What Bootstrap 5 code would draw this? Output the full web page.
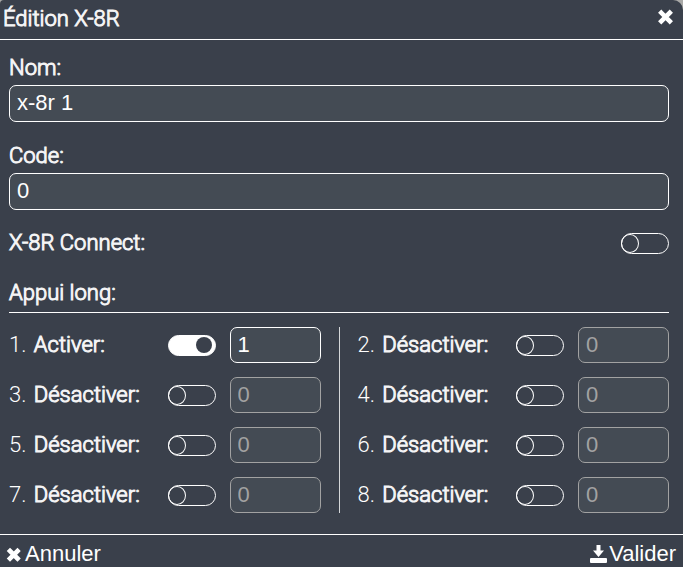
<!DOCTYPE html>
<html lang="fr">
<head>
<meta charset="utf-8">
<meta name="viewport" content="width=device-width, initial-scale=1">
<title>Édition X-8R</title>
<link href="https://cdn.jsdelivr.net/npm/bootstrap@5.3.0/dist/css/bootstrap.min.css" rel="stylesheet">
<style>
body { background: #a9a9a7; font-family: Roboto, sans-serif; font-size: 22px; line-height: 26px; color: #fff; }
.panel { background: #3a404b; border-radius: 4px 10px 0 0; min-height: 100vh; }
.panel-head { border-bottom: 1px solid #fff; padding: 6px 9px 7px 3px; }
.panel-main { padding: 15px 14px 21px 9px; }
.panel-foot { border-top: 1px solid #fff; padding: 7px 7px 0 6px; }
.title, .strong-label { font-size: 22px; line-height: 26px; font-weight: 300; -webkit-text-stroke: 1px #f4f4f5; }
.plain-btn { background: none; border: 0; padding: 0; color: #fff; font-family: "Liberation Sans", sans-serif; font-size: 22px; line-height: 24px; }
.field { background: #444b54; border: 1px solid #fff; border-radius: 7px; color: #fff; font-family: "Liberation Sans", sans-serif; font-size: 22px; line-height: 26px; height: 37px; padding: 0 7px 2px; }
.field:focus { background: #444b54; color: #fff; }
.field:disabled { background: #444b54; border-color: #a2a2a2; color: #a2a2a2; opacity: 1; }
.field-sm { width: 91px; height: 36px; padding-bottom: 0; }
.toggle { appearance: none; display: flex; align-items: center; flex: none; width: 48px; height: 21px; border: 1px solid #fff; border-radius: 11px; }
.toggle::before { content: ""; flex: none; width: 18px; height: 19px; border: 1px solid #fff; border-radius: 50%; margin-left: -1px; }
.toggle:checked { background: #fff; justify-content: end; padding-right: 3px; }
.toggle:checked::before { width: 16px; height: 16px; border: 0; background: #3a404b; }
.section { border-bottom: 1px solid #fff; padding-bottom: 6px; margin-bottom: 14px; }
.group { padding-top: 5px; }
.group-inline { padding-top: 4px; }
.num { font-weight: 300; margin-right: 2px; }
.options { row-gap: 14px; }
.split { width: 1px; background: #d5d7d9; margin: 0 18px; }
.option { gap: 14px; }
.save { gap: 2px; }
</style>
</head>
<body>
<form class="panel d-flex flex-column">
  <header class="panel-head d-flex justify-content-between align-items-center">
    <h1 class="title m-0">Édition X-8R</h1>
    <button type="button" class="plain-btn d-flex" aria-label="Fermer">
      <svg width="17" height="20" viewBox="0 0 17 20"><path d="M4.300 3.800 12.700 12.200M12.700 3.800 4.300 12.200" fill="none" stroke="#fff" stroke-width="4.600" stroke-linecap="square"/></svg>
    </button>
  </header>
  <main class="panel-main">
    <label class="strong-label d-block mb-1" for="nom">Nom:</label>
    <input class="field form-control mb-3" id="nom" type="text" value="x-8r 1">
    <div class="group">
      <label class="strong-label d-block mb-1" for="code">Code:</label>
      <input class="field form-control" id="code" type="text" value="0">
    </div>
    <div class="group-inline d-flex justify-content-between align-items-center mt-3">
      <label class="strong-label" for="connect">X-8R Connect:</label>
      <input class="toggle m-0" id="connect" type="checkbox" role="switch">
    </div>
    <h2 class="strong-label section mt-4 pt-0">Appui long:</h2>
    <div class="d-flex">
      <div class="options d-flex flex-column flex-fill">
        <div class="option d-flex align-items-center">
          <label class="me-auto" for="s1"><span class="num">1. </span><span class="strong-label">Activer:</span></label>
          <input class="toggle m-0" id="s1" type="checkbox" role="switch" checked>
          <input class="field field-sm form-control" type="text" value="1" aria-label="Valeur 1">
        </div>
        <div class="option d-flex align-items-center">
          <label class="me-auto" for="s3"><span class="num">3. </span><span class="strong-label">Désactiver:</span></label>
          <input class="toggle m-0" id="s3" type="checkbox" role="switch">
          <input class="field field-sm form-control" type="text" value="0" aria-label="Valeur 3" disabled>
        </div>
        <div class="option d-flex align-items-center">
          <label class="me-auto" for="s5"><span class="num">5. </span><span class="strong-label">Désactiver:</span></label>
          <input class="toggle m-0" id="s5" type="checkbox" role="switch">
          <input class="field field-sm form-control" type="text" value="0" aria-label="Valeur 5" disabled>
        </div>
        <div class="option d-flex align-items-center">
          <label class="me-auto" for="s7"><span class="num">7. </span><span class="strong-label">Désactiver:</span></label>
          <input class="toggle m-0" id="s7" type="checkbox" role="switch">
          <input class="field field-sm form-control" type="text" value="0" aria-label="Valeur 7" disabled>
        </div>
      </div>
      <div class="split"></div>
      <div class="options d-flex flex-column flex-fill">
        <div class="option d-flex align-items-center">
          <label class="me-auto" for="s2"><span class="num">2. </span><span class="strong-label">Désactiver:</span></label>
          <input class="toggle m-0" id="s2" type="checkbox" role="switch">
          <input class="field field-sm form-control" type="text" value="0" aria-label="Valeur 2" disabled>
        </div>
        <div class="option d-flex align-items-center">
          <label class="me-auto" for="s4"><span class="num">4. </span><span class="strong-label">Désactiver:</span></label>
          <input class="toggle m-0" id="s4" type="checkbox" role="switch">
          <input class="field field-sm form-control" type="text" value="0" aria-label="Valeur 4" disabled>
        </div>
        <div class="option d-flex align-items-center">
          <label class="me-auto" for="s6"><span class="num">6. </span><span class="strong-label">Désactiver:</span></label>
          <input class="toggle m-0" id="s6" type="checkbox" role="switch">
          <input class="field field-sm form-control" type="text" value="0" aria-label="Valeur 6" disabled>
        </div>
        <div class="option d-flex align-items-center">
          <label class="me-auto" for="s8"><span class="num">8. </span><span class="strong-label">Désactiver:</span></label>
          <input class="toggle m-0" id="s8" type="checkbox" role="switch">
          <input class="field field-sm form-control" type="text" value="0" aria-label="Valeur 8" disabled>
        </div>
      </div>
    </div>
  </main>
  <footer class="panel-foot d-flex justify-content-between">
    <button type="button" class="plain-btn d-flex align-items-center">
      <svg class="me-1" width="15" height="16" viewBox="0 0 15 16"><path d="M4 5 11.500 12.500M11.500 5 4 12.500" fill="none" stroke="#fff" stroke-width="4.600" stroke-linecap="square"/></svg>Annuler
    </button>
    <button type="submit" class="plain-btn save d-flex align-items-center">
      <svg width="17" height="18" viewBox="0 0 17 18"><path d="M6.500 0h4v5.500h3.500L8.500 12 3 5.500H6.500zM1 13h15q1 0 1 1v3q0 1-1 1H1q-1 0-1-1v-3q0-1 1-1z" fill="#fff"/></svg>Valider
    </button>
  </footer>
</form>
<script src="https://cdn.jsdelivr.net/npm/bootstrap@5.3.0/dist/js/bootstrap.bundle.min.js"></script>
</body>
</html>
